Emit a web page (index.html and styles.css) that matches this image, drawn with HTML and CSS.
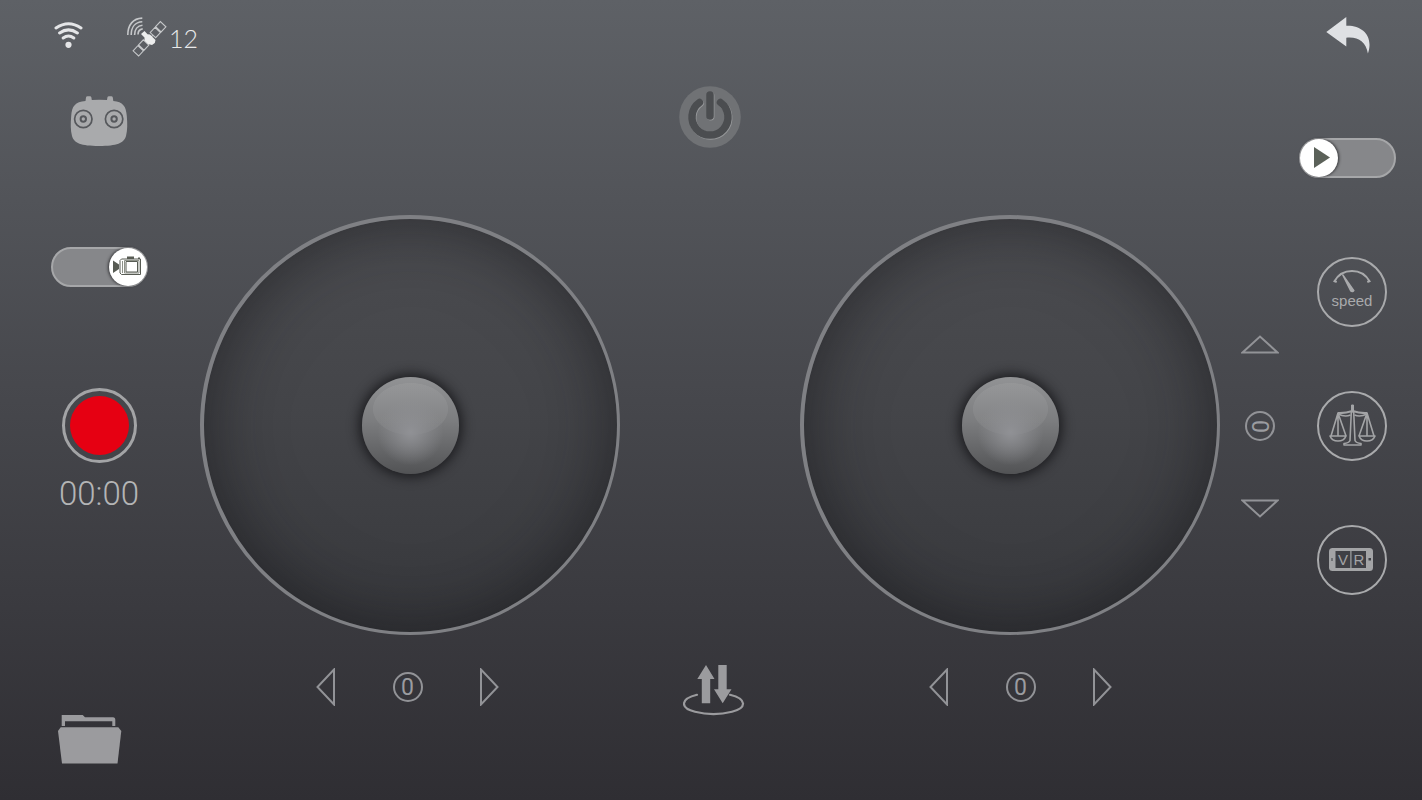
FILE: index.html
```html
<!DOCTYPE html>
<html lang="en">
<head>
    <meta charset="UTF-8">
    <meta name="viewport" content="width=device-width, initial-scale=1.0">
    <title>Flight Controller</title>
    <link rel="stylesheet" href="styles.css">
</head>
<body>
    <!-- Left side: status, camera and files -->
    <aside class="rail rail-left">
        <div class="status">
            <svg class="wifi" width="29" height="28" viewBox="0 0 29 28" fill="none" stroke="#e4e5e7" stroke-width="3" stroke-linecap="round">
                <path d="M2 7Q14.5-1.500 27 7M5.600 12Q14.500 5.800 23.400 12M9.200 17Q14.500 13 19.800 17"/>
                <circle cx="14.5" cy="23.8" r="3.1" fill="#e4e5e7" stroke="none"/>
            </svg>
            <svg class="satellite" width="41" height="42" viewBox="0 0 41 42" fill="none" stroke="#c6c8ca">
                <path stroke-width="1.6" d="M1.8 19C1.8 9 7 2.3 16.3 2.1M5.2 19C5.2 11.5 9 6 16.3 5.7M8.6 19C8.6 13.5 11.5 9.6 16.5 9.3M12 18.5C12 15.5 13.5 13.3 16.7 12.9"/>
                <g transform="translate(23.5 22.8) rotate(-47)">
                    <path stroke-width="1.1" d="M-20-3.8H-13V3.8H-20ZM-12-3.8H-5V3.8H-12ZM5-3.8H12V3.8H5ZM13-3.8H20V3.8H13ZM-13 0H-12M12 0H13M-5 0H5"/>
                </g>
                <path fill="#eceded" stroke="none" d="M15 18L18.5 15L21.5 18.2L24 18.5L29.5 24L28.8 27L26 29L22 28L18.5 24.5V21.5Z"/>
            </svg>
            <span class="sat-count">12</span>
        </div>

        <button class="icon-btn remote" aria-label="Remote controller">
            <svg width="58" height="51" viewBox="0 0 58 51">
                <path fill="#a9aaac" d="M15.5 5L16 1.500Q16.200.3 17.500.3H20Q21.200.3 21.400 1.500L21.800 4Q29 3.700 37 4L37.400 1.500Q37.600.3 39 .3H41.300Q42.500.3 42.800 1.500L43.300 5C53 6 56 10 56.800 20C57.500 28 57.500 34 56 40C54 47 47 50 29 50C11 50 4 47 2 40C.5 34 .5 28 1.200 20C2 10 5 6 15.500 5Z"/>
                <g fill="none" stroke="#56585c" stroke-width="1.7">
                    <circle cx="13.3" cy="23" r="8.7"/>
                    <circle cx="13.3" cy="23" r="2.7" stroke-width="2"/>
                    <circle cx="44.1" cy="23" r="8.7"/>
                    <circle cx="44.1" cy="23" r="2.7" stroke-width="2"/>
                </g>
            </svg>
        </button>

        <label class="toggle toggle-camera">
            <input type="checkbox" aria-label="Video mode" checked>
            <span class="toggle-knob">
                <svg width="38" height="38" viewBox="0 0 38 38">
                    <path fill="#575b53" d="M4 12.5L10 16.5V21L4 25ZM18 8.5H25V11H18ZM29 9.500H31V11H29Z"/>
                    <path fill="none" stroke="#575b53" d="M12.500 11H31.500V26.500H12.500L11 25V12.500Z"/>
                    <path fill="none" stroke="#8d9188" d="M13.500 13V25M15.500 12.500H30V25H15.500Z"/>
                    <path fill="#fff" stroke="#575b53" d="M17 13.500H28.500V24H17Z"/>
                </svg>
            </span>
        </label>

        <div class="recorder">
            <button class="record-btn" aria-label="Record"></button>
            <time class="record-time">00:00</time>
        </div>

        <button class="icon-btn folder" aria-label="Files">
            <svg width="64" height="50" viewBox="0 0 64 50" fill="#9b9b9e">
                <path d="M3.7 1H24.7L27 3.3H55Q57.3 3.3 57.3 6V12H54.3V7.3H7V12H3.7Z"/>
                <path d="M2.7 13.3H60.3L63.3 17L59.5 49.5H4L0 17Z"/>
            </svg>
        </button>
    </aside>

    <!-- Sticks -->
    <main class="deck">
        <button class="icon-btn power" aria-label="Power">
            <svg width="62" height="62" viewBox="0 0 62 62" fill="none" stroke-linecap="round">
                <circle cx="31" cy="31" r="30.8" fill="#707275"/>
                <g stroke="#96989a" stroke-width="7.5" transform="translate(.7 .8)">
                    <path d="M20.5 16.5A18 18 0 1 0 41.5 16.5M31 9V30"/>
                </g>
                <g stroke="#4b4d50" stroke-width="7.5">
                    <path d="M20.5 16.5A18 18 0 1 0 41.5 16.5M31 9V30"/>
                </g>
            </svg>
        </button>

        <div class="sticks">
            <div class="stick"><div class="stick-knob"></div></div>
            <div class="stick"><div class="stick-knob"></div></div>
        </div>

        <div class="deck-bottom">
            <div class="trim">
                <button class="icon-btn" aria-label="Trim left">
                    <svg width="19" height="38" viewBox="0 0 19 38"><path class="outline" d="M18 1.5V36.5L1.5 19Z"/></svg>
                </button>
                <output class="trim-value">0</output>
                <button class="icon-btn" aria-label="Trim right">
                    <svg width="19" height="38" viewBox="0 0 19 38"><path class="outline" d="M1 1.5V36.5L17.5 19Z"/></svg>
                </button>
            </div>
            <button class="icon-btn" aria-label="Take off or land">
                <svg width="62" height="52" viewBox="0 0 62 52" fill="#9b9b9e">
                    <path d="M23 1L31.5 15H27.2V39.3H18.8V15H14.3ZM35.3 1H43.7V25.3H48.5L39.7 39.3L31 25.3H35.3Z"/>
                    <path fill="none" stroke="#9b9b9e" stroke-width="2.2" stroke-linecap="round" d="M14 30.8C-3 35-3 44 12 47.8C24 50.7 37 50.7 49 47.8C64 44 64 35 47 30.8"/>
                </svg>
            </button>
            <div class="trim">
                <button class="icon-btn" aria-label="Trim left">
                    <svg width="19" height="38" viewBox="0 0 19 38"><path class="outline" d="M18 1.5V36.5L1.5 19Z"/></svg>
                </button>
                <output class="trim-value">0</output>
                <button class="icon-btn" aria-label="Trim right">
                    <svg width="19" height="38" viewBox="0 0 19 38"><path class="outline" d="M1 1.5V36.5L17.5 19Z"/></svg>
                </button>
            </div>
        </div>
    </main>

    <!-- Right side: flight options -->
    <aside class="rail rail-right">
        <button class="icon-btn back" aria-label="Back">
            <svg width="45" height="39" viewBox="0 0 45 39">
                <path fill="#dfe1e4" d="M.3 16L20.3 1V9.8C36 9 48 20 41.9 37.5C40 26 32 20.5 20.3 21.8V30.5Z"/>
            </svg>
        </button>

        <label class="toggle toggle-play">
            <input type="checkbox" aria-label="Playback">
            <span class="toggle-knob">
                <svg width="38" height="38" viewBox="0 0 38 38"><path fill="#5b6159" d="M14 8V29L30 18.5Z"/></svg>
            </span>
        </label>

        <div class="options">
            <div class="trim trim-vertical">
                <button class="icon-btn" aria-label="Trim up">
                    <svg width="38" height="19" viewBox="0 0 38 19"><path class="outline" d="M1.5 17.5H36.5L19 1.5Z"/></svg>
                </button>
                <output class="trim-value">0</output>
                <button class="icon-btn" aria-label="Trim down">
                    <svg width="38" height="19" viewBox="0 0 38 19"><path class="outline" d="M1.5 1.5H36.5L19 17.5Z"/></svg>
                </button>
            </div>
            <div class="option-list">
                <button class="round-btn">
                    <svg width="40" height="24" viewBox="0 0 40 24" fill="none" stroke="#a9aaac" stroke-width="2" stroke-linecap="round">
                        <path d="M4 12.8L2.5 12.3C10-1.5 30-1.5 37.5 12.3L36 12.8"/>
                        <path fill="#a9aaac" stroke-width="1.4" d="M10.5 5.5L18.8 22Q20.5 23.500 21.800 21.500Z"/>
                    </svg>
                    <span class="speed-label">speed</span>
                </button>
                <button class="round-btn" aria-label="Calibrate">
                    <svg width="48" height="44" viewBox="0 0 48 44" fill="none" stroke="#a3a4a6" stroke-width="1.6" stroke-linejoin="round">
                        <path fill="#a3a4a6" stroke-width="1" d="M23.5 1H25.5V8H23.500Z"/>
                        <path d="M23.3 8L22 36.500Q21 39 16 39.500V41H33V39.500Q28 39 27 36.500L25.700 8"/>
                        <path stroke-width="2.2" d="M9.500 9Q17 9.500 24.500 7Q32 9.500 39.500 9"/>
                        <path d="M10 10Q17 13.500 22.500 11M39 10Q32 13.500 26.500 11"/>
                        <path d="M10 9L3 32M10 9V32M10 9L18 32M39 9L31 32M39 9V32M39 9L46 32"/>
                        <path d="M2 32H18Q16 37 10 37Q4 37 2 32ZM31 32H47Q45 37 39 37Q33 37 31 32Z"/>
                    </svg>
                </button>
                <button class="round-btn" aria-label="VR">
                    <svg width="46" height="24" viewBox="0 0 46 24">
                        <rect x="0" y="0" width="44" height="23" rx="3.5" fill="#a3a4a6"/>
                        <path fill="#3f4045" d="M6.500 3H21.300V20H6.500ZM22.500 3H37V20H22.500ZM2.500 10H3.500V13H2.500ZM39.500 10H42V12.500H39.500Z"/>
                        <text class="vr-text" x="14" y="17">V</text>
                        <text class="vr-text" x="30" y="17">R</text>
                    </svg>
                </button>
            </div>
        </div>
    </aside>
</body>
</html>
```

FILE: styles.css
```css
* {
    box-sizing: border-box;
}
body {
    margin: 0;
    min-height: 100vh;
    display: grid;
    grid-template-columns: 200px 1fr 202px;
    background: linear-gradient(#5e6166, #46474c 50%, #2f2e33);
    color: #b4b5b6;
    font-family: Roboto, "Liberation Sans", sans-serif;
}
svg {
    display: block;
}
button {
    padding: 0;
    border: none;
    background: none;
    color: inherit;
    font: inherit;
    cursor: pointer;
}
.icon-btn {
    display: block;
}
.outline {
    fill: none;
    stroke: #929397;
    stroke-width: 2;
}

/* side rails */
.rail {
    display: flex;
    flex-direction: column;
}
.rail-left {
    align-items: center;
    padding: 16px 2px 36px 0;
}
.rail-right {
    align-items: flex-end;
    padding-top: 16px;
}
.status {
    align-self: flex-end;
    display: flex;
    align-items: center;
    height: 42px;
    margin-bottom: 38px;
}
.wifi {
    margin: 0 43px 4px 0;
}
.sat-count {
    margin-left: 2px;
    padding-top: 2px;
    font-family: Lato, sans-serif;
    font-size: 25px;
    font-weight: 300;
    line-height: 32px;
    color: #e8e9ea;
}
.remote {
    margin-bottom: 100px;
}
.folder {
    align-self: flex-start;
    margin: auto 0 0 58px;
}
.back {
    margin: 0 51px 83px 0;
}

/* switches */
.toggle {
    position: relative;
    display: block;
    width: 97px;
    height: 40px;
}
.toggle input {
    appearance: none;
    display: block;
    width: 100%;
    height: 100%;
    margin: 0;
    border: 2px solid #a6a7a9;
    border-radius: 20px;
    background: #86878a;
    cursor: pointer;
}
.toggle-knob {
    position: absolute;
    top: 1px;
    left: 1px;
    border-radius: 50%;
    background: #fff;
    box-shadow: 1px 0 3px rgba(30, 30, 32, 0.8);
    pointer-events: none;
}
.toggle input:checked + .toggle-knob {
    left: auto;
    right: 1px;
    box-shadow: -1px 0 3px rgba(30, 30, 32, 0.8);
}
.toggle-camera {
    margin-bottom: 101px;
}
.toggle-play {
    margin: 0 26px 79px 0;
}

/* recorder */
.recorder {
    display: flex;
    flex-direction: column;
    align-items: center;
    gap: 12px;
}
.record-btn {
    width: 75px;
    height: 75px;
    padding: 5px;
    border: 3px solid #a3a4a6;
    border-radius: 50%;
    background: #e60012 content-box;
}
.record-time {
    font-size: 33px;
    font-weight: 300;
    line-height: 38px;
}

/* centre */
.deck {
    display: flex;
    flex-direction: column;
    padding-top: 86px;
}
.power {
    align-self: center;
}
.sticks {
    display: flex;
    justify-content: space-between;
    margin: 67px 0 29px;
}
.stick {
    width: 41.2%;
    aspect-ratio: 1;
    display: flex;
    align-items: center;
    justify-content: center;
    border: solid #7f8084;
    border-width: 4px 3px 3px 4px;
    border-radius: 50%;
    background: linear-gradient(#4c4d51, #434448 50%, #37383c);
    box-shadow: inset 0 0 70px rgba(18, 19, 22, 0.6);
}
.stick-knob {
    width: 23.4%;
    aspect-ratio: 1;
    border-radius: 50%;
    background:
        radial-gradient(circle at 50% 57%, #909195 0%, rgba(144, 145, 149, 0) 45%),
        radial-gradient(ellipse 39% 27% at 50% 33%, rgba(255, 255, 255, 0.06) 98%, transparent),
        linear-gradient(#929395, #7c7d7f 45%, #525355);
    box-shadow: 0 0 12px 3px rgba(15, 15, 18, 0.75);
}
.deck-bottom {
    display: flex;
    justify-content: space-between;
    align-items: flex-start;
    padding: 0 108px 0 116px;
}

/* trims */
.trim {
    display: flex;
    align-items: center;
    justify-content: space-between;
    width: 183px;
    height: 46px;
}
.trim-value {
    width: 30px;
    height: 30px;
    border: 2px solid #929397;
    border-radius: 50%;
    font-size: 23px;
    line-height: 27px;
    text-align: center;
    color: #9b9ca0;
}
.trim-vertical {
    flex-direction: column;
    width: 38px;
    height: 183px;
}
.trim-vertical .trim-value {
    writing-mode: vertical-rl;
}

/* round option buttons */
.options {
    display: flex;
    align-items: center;
    gap: 38px;
    margin-right: 35px;
}
.option-list {
    display: flex;
    flex-direction: column;
    gap: 64px;
}
.round-btn {
    display: flex;
    flex-direction: column;
    align-items: center;
    justify-content: center;
    width: 70px;
    height: 70px;
    border: 2px solid #a9aaac;
    border-radius: 50%;
    color: #a9aaac;
}
.speed-label {
    padding-bottom: 6px;
    font-family: "Liberation Sans", sans-serif;
    font-size: 15px;
    line-height: 16px;
}
.vr-text {
    fill: #a3a4a6;
    font-family: "Liberation Sans", sans-serif;
    font-size: 15px;
    text-anchor: middle;
}
```
